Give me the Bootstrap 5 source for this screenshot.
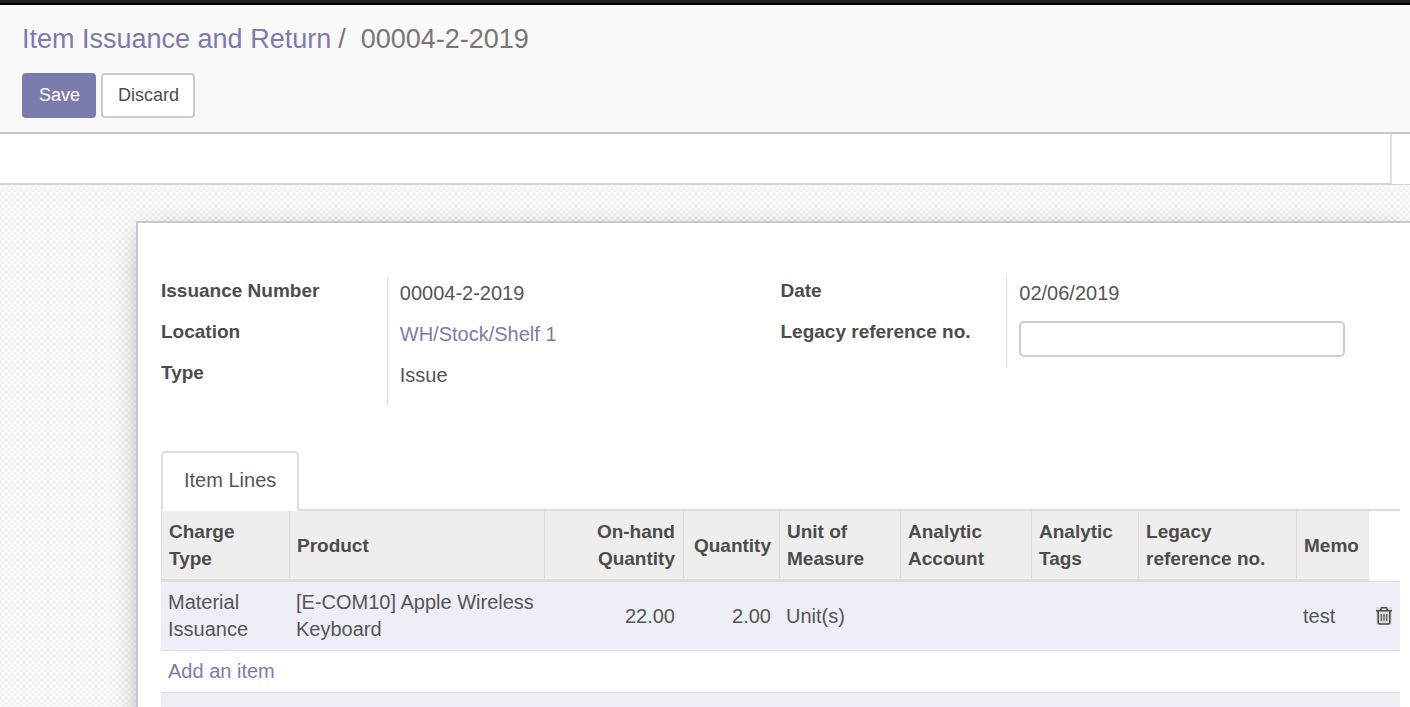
<!DOCTYPE html>
<html lang="en">
<head>
<meta charset="utf-8">
<meta name="viewport" content="width=device-width, initial-scale=1">
<title>Item Issuance and Return</title>
<link href="https://cdn.jsdelivr.net/npm/bootstrap@5.3.0/dist/css/bootstrap.min.css" rel="stylesheet">
<style>
  :root { --brand: #7c7bad; --ink: #4c4c4c; --line: #dddddd; }
  body { font-family: "Liberation Sans", Arial, sans-serif; font-size: 20px; line-height: 27px; color: var(--ink); background: #fff; }
  a { color: var(--brand); text-decoration: none; }
  a:hover { text-decoration: underline; }
  .top-strip { height: 5px; background: #222; border-bottom: 2px solid #000; }
  .control-panel { background: #f9f9f9; border-bottom: 2px solid #c8c8c8; padding: 16px 22px 14px; }
  .breadcrumb { --bs-breadcrumb-font-size: 27px; line-height: 36px; margin-bottom: 16px; color: #777; }
  .breadcrumb .sep { padding: 0 15px 0 7px; }
  .panel-btn { font-size: 18px; line-height: 25px; padding: 8px 14px 8px 15px; border-width: 2px; border-radius: 4px; }
  .btn-save { --bs-btn-color: #fff; --bs-btn-bg: var(--brand); --bs-btn-border-color: var(--brand); --bs-btn-hover-color: #fff; --bs-btn-hover-bg: #5f5e97; }
  .btn-discard { --bs-btn-color: var(--ink); --bs-btn-bg: #fff; --bs-btn-border-color: #ccc; --bs-btn-hover-bg: #eee; --bs-btn-hover-border-color: #bbb; }
  .button-row { gap: 5px; }
  .status-row { height: 51px; border-bottom: 1px solid #d5d5d5; }
  .status-main { border-right: 2px solid #e2e2e2; border-bottom: 1px solid #d5d5d5; margin-right: 18px; }
  .form-area {
    background-color: #e4e4e4;
    background-image: radial-gradient(circle, #fff 1px, transparent 3px), radial-gradient(circle, #fff 1px, transparent 3px);
    background-size: 6px 6px;
    background-position: 0 0, 3px 3px;
    padding: 36px 0 0 136px;
  }
  .sheet { background: #fff; border: solid #c8c8d3; border-width: 2px 0 0 2px; box-shadow: 0 7px 28px -8px rgba(0,0,0,.4); padding: 54px 10px 0 23px; }
  .field-group { padding-right: 55px; }
  .field-label { width: 40%; font-size: 19px; font-weight: bold; }
  .field-rows { min-height: 41px; }
  .field-value { width: 60%; color: #555; border-left: 1px solid var(--line); padding: 3px 0 11px 12px; }
  .field-rows:nth-child(3) { min-height: 47px; }
  .ref-input { height: 36px; border: 2px solid #ccc; border-radius: 5px; font-size: 20px; }
  .line-tabs { --bs-nav-tabs-border-width: 2px; --bs-nav-tabs-border-color: var(--line); --bs-nav-tabs-border-radius: 5px; --bs-nav-tabs-link-active-color: #555; --bs-nav-tabs-link-active-border-color: var(--line) var(--line) #fff; margin-top: 45px; }
  .line-tabs .nav-link { padding: 14px 21px 15px; }
  .lines { table-layout: fixed; border-collapse: separate; border-spacing: 0; width: 100%; }
  .lines th, .lines td { padding: 7px 8px; vertical-align: middle; }
  .lines thead th { font-size: 19px; background: #eee; border: solid var(--line); border-width: 0 0 3px 1px; padding-left: 7px; }
  .lines thead td { border-bottom: 1px solid var(--line); }
  .lines tbody td { color: #555; border-bottom: 1px solid var(--line); padding-left: 7px; }
  .lines .tinted td { background: #eeeef7; }
  .trash { width: 16px; height: 20px; display: block; }
</style>
</head>
<body>
<div class="vh-100 d-flex flex-column overflow-hidden">
  <div class="top-strip flex-shrink-0"></div>
  <header class="control-panel flex-shrink-0">
    <nav class="breadcrumb flex-nowrap text-nowrap" aria-label="breadcrumb">
      <a href="#">Item Issuance and Return</a><span class="sep">/</span><span aria-current="page">00004-2-2019</span>
    </nav>
    <div class="d-flex button-row">
      <button type="button" class="btn panel-btn btn-save">Save</button>
      <button type="button" class="btn panel-btn btn-discard">Discard</button>
    </div>
  </header>
  <div class="status-row d-flex flex-shrink-0"><div class="status-main flex-grow-1"></div></div>
  <main class="form-area d-flex flex-grow-1">
    <form class="sheet flex-grow-1">
      <div class="row g-0 align-items-start">
        <div class="col-6 field-group">
          <div class="d-flex field-rows"><span class="field-label">Issuance Number</span><div class="field-value">00004-2-2019</div></div>
          <div class="d-flex field-rows"><span class="field-label">Location</span><div class="field-value"><a href="#">WH/Stock/Shelf 1</a></div></div>
          <div class="d-flex field-rows"><span class="field-label">Type</span><div class="field-value">Issue</div></div>
        </div>
        <div class="col-6 field-group">
          <div class="d-flex field-rows"><span class="field-label">Date</span><div class="field-value">02/06/2019</div></div>
          <div class="d-flex field-rows"><label class="field-label" for="legacy-ref">Legacy reference no.</label><div class="field-value"><input type="text" id="legacy-ref" class="form-control ref-input"></div></div>
        </div>
      </div>
      <ul class="nav nav-tabs line-tabs">
        <li class="nav-item"><a class="nav-link active" href="#lines" aria-current="true">Item Lines</a></li>
      </ul>
      <table class="lines" id="lines">
        <colgroup>
          <col style="width:10.33%"><col style="width:20.58%"><col style="width:11.22%"><col style="width:7.75%"><col style="width:9.77%"><col style="width:10.57%"><col style="width:8.64%"><col style="width:12.75%"><col style="width:5.89%"><col style="width:2.5%">
        </colgroup>
        <thead>
          <tr>
            <th>Charge Type</th><th>Product</th><th class="text-end ps-5">On-hand Quantity</th><th class="text-end">Quantity</th><th>Unit of Measure</th><th>Analytic Account</th><th>Analytic Tags</th><th>Legacy reference no.</th><th>Memo</th><td></td>
          </tr>
        </thead>
        <tbody>
          <tr class="tinted">
            <td>Material Issuance</td><td>[E-COM10] Apple Wireless Keyboard</td><td class="text-end">22.00</td><td class="text-end">2.00</td><td>Unit(s)</td><td></td><td></td><td></td><td>test</td>
            <td>
              <button type="button" class="border-0 bg-transparent p-0 d-block" aria-label="Delete line">
                <svg class="trash" viewBox="0 0 16 20" fill="none" stroke="#4c4c4c" stroke-width="1.6"><path fill="#ddd" stroke="none" d="M0 1h16v18H0z"/><path d="M0 4.7h16M4.5 4.5 5.5 1.7h5l1 2.8M2.2 5v11.5q0 1.5 1.5 1.5h8.6q1.5 0 1.5-1.5V5"/><path stroke-width="1.2" d="M5.3 8v7M8 8v7M10.7 8v7"/></svg>
              </button>
            </td>
          </tr>
          <tr><td colspan="10"><a href="#">Add an item</a></td></tr>
          <tr class="tinted"><td colspan="10">&nbsp;</td></tr>
        </tbody>
      </table>
    </form>
  </main>
</div>
<script src="https://cdn.jsdelivr.net/npm/bootstrap@5.3.0/dist/js/bootstrap.bundle.min.js"></script>
</body>
</html>
